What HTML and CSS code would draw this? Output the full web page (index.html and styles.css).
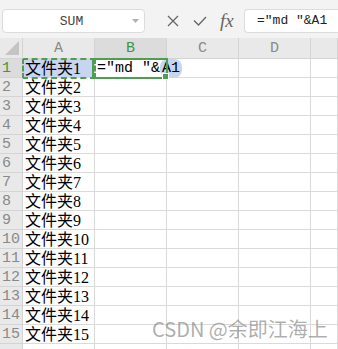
FILE: index.html
```html
<!DOCTYPE html>
<html lang="zh">
<head>
  <meta charset="UTF-8">
  <title>Sheet</title>
  <link rel="stylesheet" href="styles.css">
</head>
<body>
  <div class="topbar">
    <div class="namebox">
      <span>SUM</span>
      <svg class="caret" width="7" height="4" viewBox="0 0 7 4"><path d="M0 0h7L3.5 4z" fill="#b0b0b0"/></svg>
    </div>
    <div class="actions">
      <svg width="12" height="12" viewBox="0 0 12 12"><path d="M1 1l10 10M11 1L1 11" stroke="#666" stroke-width="1.3" fill="none"/></svg>
      <svg width="14" height="10" viewBox="0 0 14 10"><path d="M1 4.5l4.5 4.5L13 1" stroke="#666" stroke-width="1.3" fill="none"/></svg>
      <span class="fx">fx</span>
    </div>
    <div class="formula">=″md ″&amp;A1</div>
  </div>

  <div class="sheet">
    <div class="corner"><span class="tri"></span></div>
    <div class="colhead">A</div><div class="colhead on">B</div><div class="colhead">C</div><div class="colhead">D</div><div class="colhead"></div>

    <div class="rowhead on">1</div><div class="cell copy">文件夹1</div><div class="cell active">=″md ″&amp;<span class="ref">A1</span></div><div class="cell"></div><div class="cell"></div><div class="cell"></div>
    <div class="rowhead">2</div><div class="cell">文件夹2</div><div class="cell"></div><div class="cell"></div><div class="cell"></div><div class="cell"></div>
    <div class="rowhead">3</div><div class="cell">文件夹3</div><div class="cell"></div><div class="cell"></div><div class="cell"></div><div class="cell"></div>
    <div class="rowhead">4</div><div class="cell">文件夹4</div><div class="cell"></div><div class="cell"></div><div class="cell"></div><div class="cell"></div>
    <div class="rowhead">5</div><div class="cell">文件夹5</div><div class="cell"></div><div class="cell"></div><div class="cell"></div><div class="cell"></div>
    <div class="rowhead">6</div><div class="cell">文件夹6</div><div class="cell"></div><div class="cell"></div><div class="cell"></div><div class="cell"></div>
    <div class="rowhead">7</div><div class="cell">文件夹7</div><div class="cell"></div><div class="cell"></div><div class="cell"></div><div class="cell"></div>
    <div class="rowhead">8</div><div class="cell">文件夹8</div><div class="cell"></div><div class="cell"></div><div class="cell"></div><div class="cell"></div>
    <div class="rowhead">9</div><div class="cell">文件夹9</div><div class="cell"></div><div class="cell"></div><div class="cell"></div><div class="cell"></div>
    <div class="rowhead">10</div><div class="cell">文件夹10</div><div class="cell"></div><div class="cell"></div><div class="cell"></div><div class="cell"></div>
    <div class="rowhead">11</div><div class="cell">文件夹11</div><div class="cell"></div><div class="cell"></div><div class="cell"></div><div class="cell"></div>
    <div class="rowhead">12</div><div class="cell">文件夹12</div><div class="cell"></div><div class="cell"></div><div class="cell"></div><div class="cell"></div>
    <div class="rowhead">13</div><div class="cell">文件夹13</div><div class="cell"></div><div class="cell"></div><div class="cell"></div><div class="cell"></div>
    <div class="rowhead">14</div><div class="cell">文件夹14</div><div class="cell"></div><div class="cell"></div><div class="cell"></div><div class="cell"></div>
    <div class="rowhead">15</div><div class="cell">文件夹15</div><div class="cell"></div><div class="cell"></div><div class="cell"></div><div class="cell"></div>
    <div class="rowhead"></div><div class="cell"></div><div class="cell"></div><div class="cell"></div><div class="cell"></div><div class="cell"></div>
  </div>

  <div class="watermark">CSDN @余即江海上</div>
</body>
</html>
```

FILE: styles.css
```css
/* Page */
body {
    margin: 0;
    width: 338px;
    height: 349px;
    overflow: hidden;
    background-color: #ffffff;
    font-family: "Liberation Serif", "Noto Sans CJK SC", serif;
    position: relative;
}

/* Formula toolbar */
.topbar {
    height: 38px;
    box-sizing: border-box;
    padding: 9px 0 0 2px;
    display: flex;
    align-items: flex-start;
    background-color: #f3f3f3;
}

.namebox {
    width: 143px;
    height: 24px;
    box-sizing: border-box;
    border: 1px solid #dcdcdc;
    border-radius: 4px;
    background-color: #ffffff;
    display: flex;
    align-items: center;
    font-family: "Liberation Mono", monospace;
    font-size: 13px;
    color: #444444;
}

.namebox span {
    flex: 1;
    text-align: center;
    padding-left: 8px;
}

.namebox .caret {
    margin-right: 5px;
}

.actions {
    width: 97px;
    height: 24px;
    display: flex;
    align-items: center;
    padding-left: 22px;
    box-sizing: border-box;
    gap: 14px;
}

.fx {
    font-family: "Liberation Serif", serif;
    font-style: italic;
    font-size: 19px;
    color: #666666;
    margin-left: -1px;
}

.formula {
    flex: 1;
    height: 24px;
    box-sizing: border-box;
    margin-left: 2px;
    border: 1px solid #dcdcdc;
    border-right: none;
    border-radius: 4px 0 0 4px;
    background-color: #ffffff;
    padding-left: 12px;
    font-family: "Liberation Mono", monospace;
    font-size: 13px;
    line-height: 22px;
    color: #222222;
}

/* Sheet grid */
.sheet {
    display: grid;
    grid-template-columns: 23px repeat(4, 72px) 1fr;
    grid-template-rows: 21px repeat(16, 19px);
}

.corner,
.colhead,
.rowhead {
    background-color: #e9e9e9;
    color: #8a8a8a;
    border-right: 1px solid #d4d4d4;
    border-bottom: 1px solid #d4d4d4;
    box-sizing: border-box;
}

.corner {
    position: relative;
}

.corner .tri {
    position: absolute;
    right: 3px;
    bottom: 3px;
    width: 0;
    height: 0;
    border-left: 14px solid transparent;
    border-bottom: 14px solid #c4c4c4;
}

.colhead {
    font-family: "Liberation Mono", monospace;
    font-size: 15px;
    text-align: center;
    line-height: 22px;
}

.rowhead {
    font-family: "Liberation Mono", monospace;
    font-size: 15px;
    line-height: 19px;
    padding-left: 2px;
}

.colhead.on,
.rowhead.on {
    background-color: #dcdcdc;
    color: #3c9a3c;
}

.cell {
    border-right: 1px solid #dadada;
    border-bottom: 1px solid #dadada;
    box-sizing: border-box;
    font-size: 16px;
    line-height: 19px;
    padding-left: 2px;
    white-space: nowrap;
    color: #000000;
}

/* Copied cell with marching border */
.cell.copy {
    background-color: #c7d5ef;
    outline: 2px dashed #4e9e52;
    outline-offset: -1px;
}

/* Active editing cell */
.cell.active {
    position: relative;
    z-index: 1;
    overflow: visible;
    outline: 2px solid #4e9e52;
    outline-offset: -1px;
    margin-left: -2px;
    padding-left: 4px;
    font-family: "Liberation Mono", monospace;
    font-size: 15px;
}

.cell.active::after {
    content: "";
    position: absolute;
    right: -3px;
    bottom: -3px;
    width: 5px;
    height: 5px;
    background-color: #4e9e52;
    border: 1px solid #ffffff;
}

.ref {
    background-color: #c7d5ef;
    border-radius: 8px;
    padding: 1px 2px;
}

/* Watermark */
.watermark {
    position: absolute;
    left: 152px;
    top: 317px;
    font-family: "Noto Sans CJK SC", sans-serif;
    font-size: 20px;
    line-height: 24px;
    color: rgba(120, 120, 120, 0.6);
    white-space: nowrap;
}
```
